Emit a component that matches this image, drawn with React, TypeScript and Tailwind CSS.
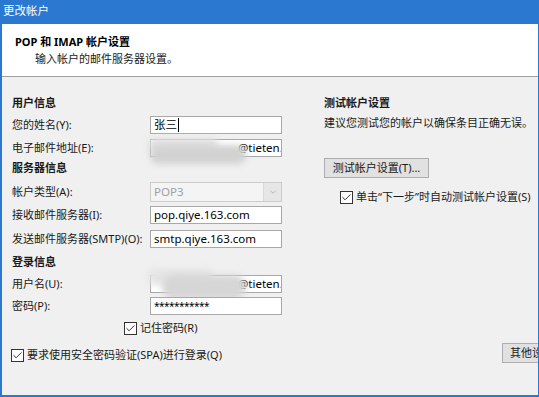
import { Check, ChevronDown } from 'lucide-react';

const font = { fontFamily: '"Noto Sans", "Noto Sans CJK SC", sans-serif' };

const Field = ({ children }: { children?: React.ReactNode }) => (
  <div className="flex h-[18px] w-[132px] items-center overflow-hidden border border-[#a8a8a8] bg-white pl-[3px] text-[11.5px] whitespace-nowrap text-black">
    {children}
  </div>
);

const Row = ({
  label,
  className,
  children,
}: {
  label: string;
  className?: string;
  children: React.ReactNode;
}) => (
  <div className={`relative flex items-center ${className ?? ''}`}>
    <span className="w-[138px] text-[11px] leading-[18px] whitespace-nowrap text-[#1a1a1a]">
      {label}
    </span>
    {children}
  </div>
);

const CheckBox = ({ label, className }: { label: string; className?: string }) => (
  <div className={`flex h-[16px] items-center gap-[3px] ${className ?? ''}`}>
    <span className="flex h-[13px] w-[13px] shrink-0 items-center justify-center border border-[#333] bg-white">
      <Check className="h-[11px] w-[11px] text-[#222]" strokeWidth={2} />
    </span>
    <span className="text-[11px] leading-[16px] whitespace-nowrap text-[#1a1a1a]">{label}</span>
  </div>
);

const Heading = ({ text, className }: { text: string; className?: string }) => (
  <div
    className={`h-[20px] text-[11px] font-bold leading-[20px] text-[#1a1a1a] ${className ?? ''}`}
  >
    {text}
  </div>
);

// blurred patches that hide the address in the original screenshot
const Smudge = ({ className }: { className: string }) => (
  <div className={`pointer-events-none absolute blur-[3px] ${className}`} />
);

export default function App() {
  return (
    <div
      className="flex h-[397px] w-[539px] flex-col overflow-hidden border-r border-b-2 border-l-2 border-[#2b78d0] bg-[#f0f0f0]"
      style={font}
    >
      <div className="-ml-[2px] h-[24px] shrink-0 bg-[#2b78d0] pl-[3px] text-[11.5px] leading-[22px] text-white">
        更改帐户
      </div>

      <div className="h-[53px] shrink-0 border-b border-[#a0a0a0] bg-white pt-[9px]">
        <div className="pl-[13px] text-[11px] font-bold leading-[17px] text-black">
          POP 和 IMAP 帐户设置
        </div>
        <div className="pl-[33px] text-[11px] leading-[17px] text-[#1a1a1a]">
          输入帐户的邮件服务器设置。
        </div>
      </div>

      <div className="flex flex-1">
        <div className="flex w-[312px] shrink-0 flex-col pt-[16px] pl-[10px]">
          <Heading text="用户信息" />
          <Row label="您的姓名(Y):" className="mt-[3px]">
            <Field>
              张三<span className="ml-[1px] h-[14px] w-[1px] bg-black" />
            </Field>
          </Row>
          <Row label="电子邮件地址(E):" className="mt-[5px]">
            <Field>
              <span className="ml-[84px]">@tieten.com</span>
            </Field>
            <Smudge className="top-[-1px] left-[136px] h-[12px] w-[70px] rounded-md bg-[#e2e2e2]" />
            <Smudge className="top-[6px] left-[138px] h-[19px] w-[96px] rounded-lg bg-[#d2d2d2]" />
          </Row>
          <Heading text="服务器信息" className="mt-[1px]" />
          <Row label="帐户类型(A):" className="mt-[4px]">
            <div className="flex h-[20px] w-[132px] items-center border border-[#cccccc] bg-[#f4f4f4]">
              <span className="flex-1 pl-[3px] text-[11.5px] text-[#a0a0a0]">POP3</span>
              <span className="flex h-full w-[18px] items-center justify-center border-l border-[#d8d8d8] bg-[#e6e6e6]">
                <ChevronDown className="h-[10px] w-[10px] text-[#b0b0b0]" />
              </span>
            </div>
          </Row>
          <Row label="接收邮件服务器(I):" className="mt-[4px]">
            <Field>pop.qiye.163.com</Field>
          </Row>
          <Row label="发送邮件服务器(SMTP)(O):" className="mt-[6px]">
            <Field>smtp.qiye.163.com</Field>
          </Row>
          <Heading text="登录信息" className="mt-[4px]" />
          <Row label="用户名(U):" className="mt-[3px]">
            <Field>
              <span className="ml-[84px]">@tieten.com</span>
            </Field>
            <Smudge className="top-[-6px] left-[136px] h-[16px] w-[64px] rounded-md bg-[#e4e4e4]" />
            <Smudge className="top-[0px] left-[150px] h-[24px] w-[84px] rounded-xl bg-[#d6d6d6]" />
          </Row>
          <Row label="密码(P):" className="mt-[4px]">
            <Field>
              <span className="text-[10px] tracking-[-0.5px]">***********</span>
            </Field>
          </Row>
          <CheckBox label="记住密码(R)" className="mt-[5px] ml-[112px]" />
          <CheckBox
            label="要求使用安全密码验证(SPA)进行登录(Q)"
            className="mt-[11px] -ml-[1px]"
          />
        </div>

        <div className="flex flex-1 flex-col pt-[16px] pl-[10px]">
          <Heading text="测试帐户设置" />
          <div className="text-[11px] leading-[20px] whitespace-nowrap text-[#1a1a1a]">
            建议您测试您的帐户以确保条目正确无误。
          </div>
          <button className="mt-[25px] h-[20px] w-[105px] border border-[#adadad] bg-[#e1e1e1] text-[11px] leading-[18px] text-[#1a1a1a]">
            测试帐户设置(T)...
          </button>
          <CheckBox label="单击“下一步”时自动测试帐户设置(S)" className="mt-[11px] ml-[16px]" />
          <div className="mt-[138px] ml-[178px] flex h-[20px] w-[60px] items-center border border-[#adadad] bg-[#e1e1e1] pl-[7px] text-[11px] whitespace-nowrap text-[#1a1a1a]">
            其他设置
          </div>
        </div>
      </div>
    </div>
  );
}
